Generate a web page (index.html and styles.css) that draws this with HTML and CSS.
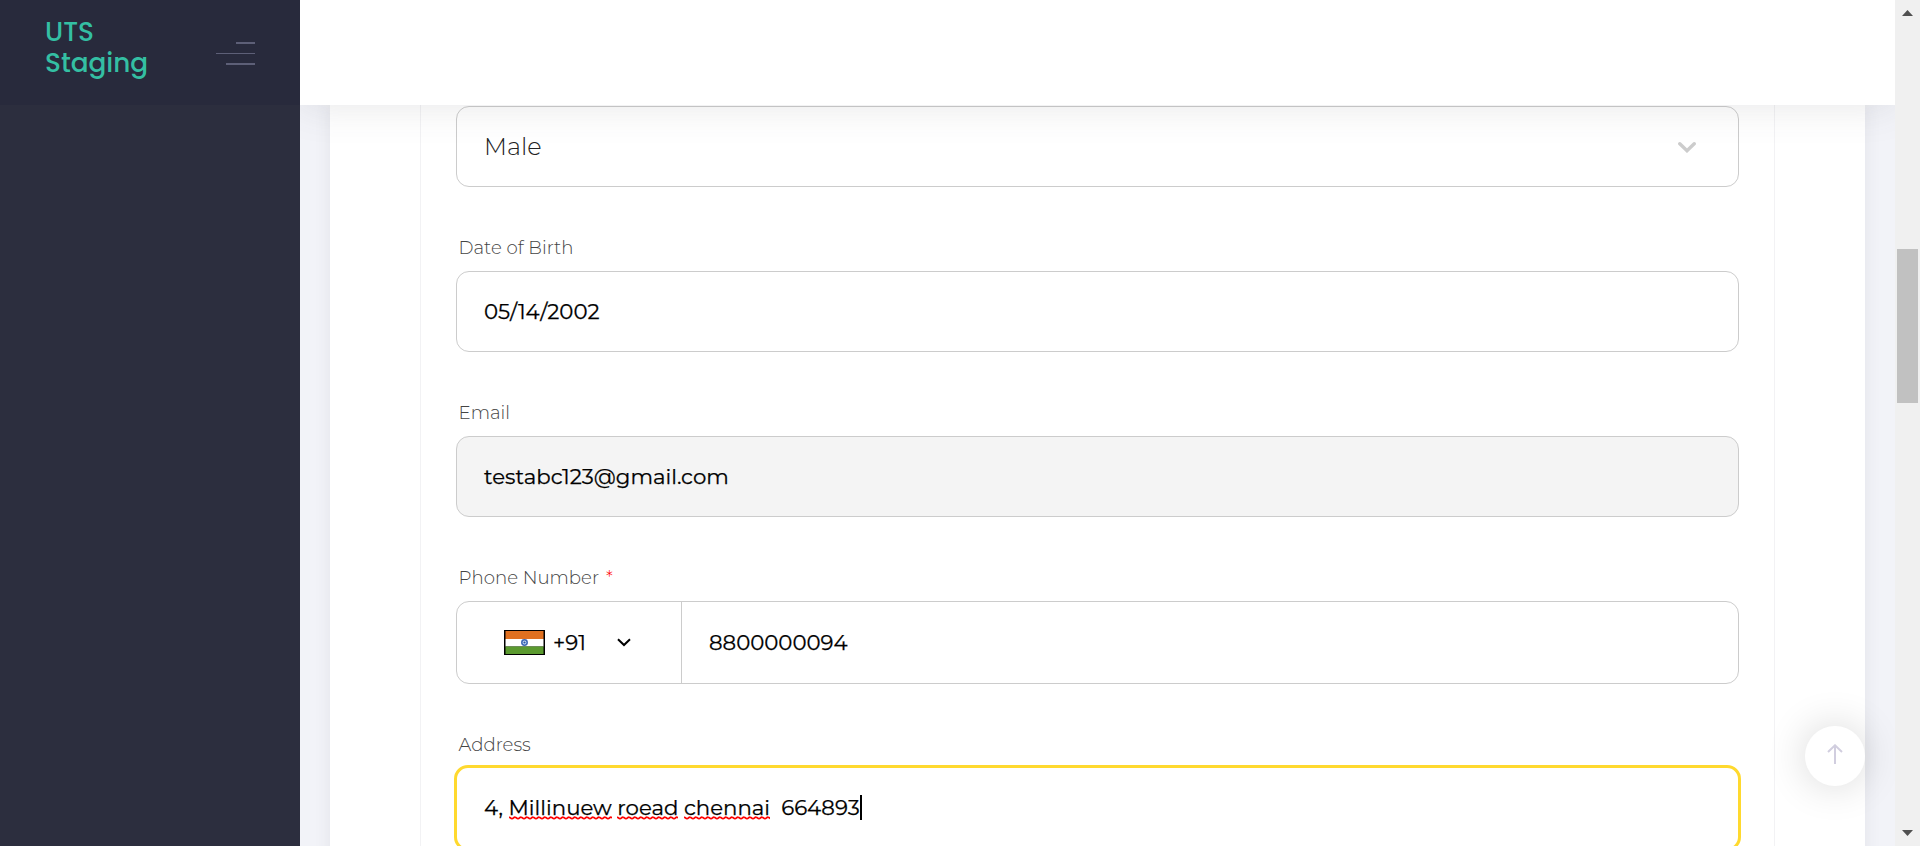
FILE: index.html
```
<!DOCTYPE html>
<html lang="en">
<head>
<meta charset="utf-8">
<title>UTS Staging</title>
<link rel="stylesheet" href="styles.css">
</head>
<body>
<div class="app">
  <aside class="sidebar">
    <div class="brand">
      <a class="logo">UTS Staging</a>
      <div class="toggler"><i class="bar short"></i><i class="bar thin"></i><i class="bar mid"></i></div>
    </div>
  </aside>
  <div class="main">
    <header class="header"></header>
    <main class="content">
      <section class="card">
        <form class="panel">
          <div class="field select">
            <span class="male">Male</span>
            <svg class="caret" width="18" height="11" viewBox="0 0 18 11"><path d="M1.800 1.800 9 8.700 16.200 1.800" fill="none" stroke="#ccc" stroke-width="3.400" stroke-linecap="round"/></svg>
          </div>
          <label class="label">Date of Birth</label>
          <div class="field"><span class="value">05/14/2002</span></div>
          <label class="label">Email</label>
          <div class="field disabled"><span class="value">testabc123@gmail.com</span></div>
          <label class="label">Phone Number<span class="star">*</span></label>
          <div class="field phone">
            <div class="country">
              <svg class="flag" width="41" height="25" viewBox="0 0 41 25"><path fill="#000" d="M0 0h41v25H0z"/><path fill="#e07020" d="M1.500 1h38v8h-38z"/><path fill="#fff" d="M1.500 9h38v7.500h-38z"/><path fill="#5b9a2f" d="M1.500 16.500h38V24h-38z"/><circle cx="20.500" cy="12.500" r="2.700" fill="#cddcf2" stroke="#3b67b5" stroke-width="1.500"/><circle cx="20.500" cy="12.500" r="1.100" fill="#2456a8"/></svg>
              <span class="value code">+91</span>
              <svg class="drop" width="14" height="9" viewBox="0 0 14 9"><path d="M1 1.200 7 7l6-5.800" fill="none" stroke="#000" stroke-width="2"/></svg>
            </div>
            <span class="value number">8800000094</span>
          </div>
          <label class="label address-label">Address</label>
          <div class="field focused"><span class="value">4, <span class="wrong">Millinuew</span> <span class="wrong">roead</span> <span class="wrong">chennai</span>  664893</span><i class="cursor"></i></div>
        </form>
      </section>
    </main>
  </div>
  <div class="scrollbar">
    <svg width="11" height="6" viewBox="0 0 11 6"><path d="M0 6 5.500 0 11 6z" fill="#505050"/></svg>
    <div class="thumb"></div>
    <svg class="down" width="11" height="6" viewBox="0 0 11 6"><path d="M0 0h11L5.500 6z" fill="#505050"/></svg>
  </div>
  <div class="scrolltop"><svg width="16" height="20" viewBox="0 0 16 20"><path d="M8 20V1.500M1 8 8 1.300 15 8" fill="none" stroke="#d1cedf" stroke-width="2"/></svg></div>
</div>
</body>
</html>
```
FILE: styles.css
```
* { box-sizing: border-box; }
body { margin: 0; overflow: hidden; font-family: Montserrat, Inter, sans-serif; }
.app { display: grid; grid-template-columns: 300px 1fr 25px; height: 846px; overflow: hidden; background: #f2f3f8; }
.sidebar { background: #2c2e3e; position: relative; z-index: 4; }
.brand { height: 105px; background: #282a3c; padding: 10px 45px 0; display: flex; justify-content: space-between; }
.logo { width: 110px; color: #34bfa3; font: 500 26.300px/31px Poppins, Inter, sans-serif; padding-top: 6px; }
.toggler { display: flex; flex-direction: column; align-items: flex-end; padding-top: 32px; }
.bar { height: 2px; background: #5d5f77; }
.short { width: 19px; }
.thin { width: 39px; height: 1px; margin: 9px 0; }
.mid { width: 29px; }
.main { display: flex; flex-direction: column; min-width: 0; height: 846px; }
.header { flex: none; height: 105px; background: #fff; position: relative; z-index: 2; box-shadow: 0 0 40px rgba(82, 82, 90, .15); }
.content { flex: 1; min-height: 0; padding: 0 30px; overflow: hidden; }
.card { height: 900px; background: #fff; padding: 0 90px; box-shadow: 0 1px 15px 1px rgba(69, 65, 78, .08); }
.panel { height: 100%; border: solid #f2f2f4; border-width: 0 1px; padding: 1px 35px 0; display: flex; flex-direction: column; }
.field { flex: none; height: 81px; border: 1px solid #ccc; border-radius: 13px; display: flex; align-items: center; padding: 0 27px; font-size: 21.280px; line-height: 26px; color: #000; white-space: pre; }
.value { padding-bottom: 1px; -webkit-text-stroke: .25px #000; }
.select { justify-content: space-between; padding-right: 42px; }
.male { font-size: 24px; font-weight: 300; color: #222; }
.caret { margin-top: 1px; }
.label { flex: none; height: 84px; padding: 47px 0 0 2.500px; font-size: 18.150px; line-height: 28px; font-weight: 300; color: #444; }
.disabled { background: #f4f4f4; }
.star { color: #f00; padding-left: 7px; }
.phone { height: 83px; padding: 0; }
.country { width: 225px; height: 100%; border-right: 1px solid #ccc; display: flex; align-items: center; padding-left: 47px; }
.code { margin-left: 8px; width: 64px; }
.number { padding-left: 27px; }
.focused { height: 86px; width: 1287px; margin: -3px 0 0 -2px; border: 3px solid #ffd92e; border-radius: 14px; padding-bottom: 2px; }
.wrong { background: url("data:image/svg+xml,%3Csvg xmlns='http://www.w3.org/2000/svg' width='6' height='4'%3E%3Cpath d='M-1.500 2.900Q0 .3 1.500 1.900T4.500 1.900T7.500 1.900' fill='none' stroke='red' stroke-width='1.700'/%3E%3C/svg%3E") 0 100% repeat-x; }
.cursor { width: 2px; height: 25px; background: #000; }
.scrollbar { background: #f0f0f0; display: flex; flex-direction: column; align-items: center; padding: 10px 0; position: relative; z-index: 3; }
.thumb { width: 21px; height: 154px; margin-top: 233px; background: #c1c1c1; }
.down { margin-top: auto; }
.scrolltop { position: absolute; z-index: 2; left: 1805px; top: 726px; width: 60px; height: 60px; border-radius: 50%; background: #fff; box-shadow: 0 0 40px rgba(0, 0, 0, .16); display: flex; justify-content: center; padding-top: 18px; }
```
